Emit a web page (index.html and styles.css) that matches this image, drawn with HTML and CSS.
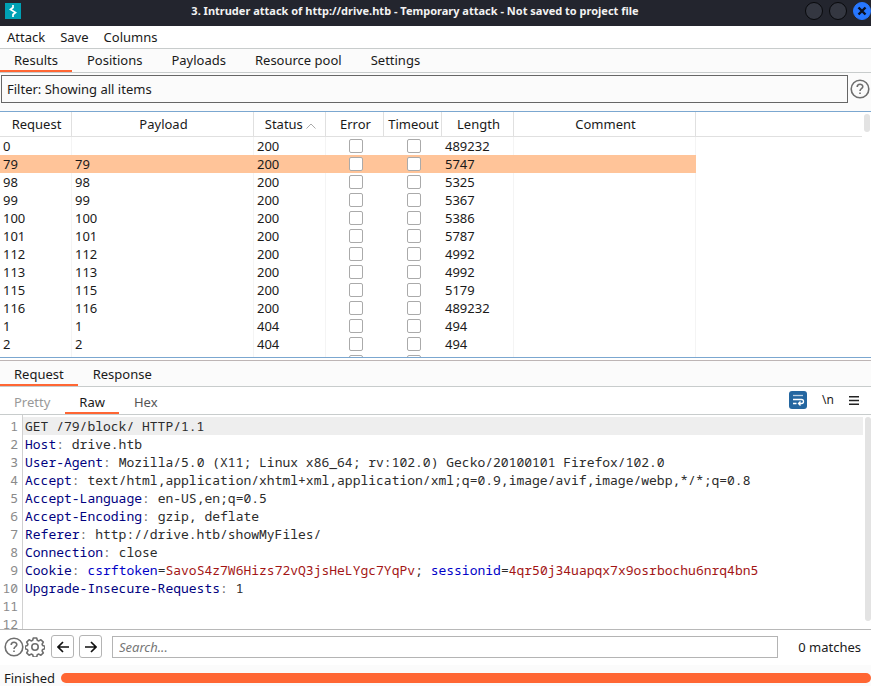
FILE: index.html
```html
<!DOCTYPE html>
<html lang="en">
<head>
	<meta charset="UTF-8">
	<meta name="viewport" content="width=device-width, initial-scale=1">
	<title>3. Intruder attack of http://drive.htb</title>
	<link rel="stylesheet" href="styles.css">
</head>
<body>
	<div class="titlebar">
		<svg class="logo" viewBox="0 0 16 16" width="16" height="16">
			<rect width="16" height="16" fill="#00a0b4"/>
			<path d="M8 2v2.500L5.500 6.500l5 3L8 11.500V14" fill="none" stroke="#fff" stroke-width="1.700"/>
		</svg>
		<h1>3. Intruder attack of http://drive.htb - Temporary attack - Not saved to project file</h1>
		<div class="winBtns">
			<button type="button" aria-label="Minimize"></button>
			<button type="button" aria-label="Maximize"></button>
			<button type="button" class="close" aria-label="Close">
				<svg viewBox="0 0 10 10" width="10" height="10"><path d="M1.500 1.500l7 7M8.500 1.500l-7 7" stroke="#0b1020" stroke-width="2.400" fill="none"/></svg>
			</button>
		</div>
	</div>

	<div class="menu">
		<button type="button">Attack</button>
		<button type="button">Save</button>
		<button type="button">Columns</button>
	</div>

	<div class="tabs">
		<button type="button" class="on">Results</button>
		<button type="button">Positions</button>
		<button type="button">Payloads</button>
		<button type="button">Resource pool</button>
		<button type="button">Settings</button>
	</div>

	<div class="filter">
		<button type="button" class="filterBtn">Filter: Showing all items</button>
		<button type="button" class="iconBtn" aria-label="Help">
			<svg viewBox="0 0 20 20" width="20" height="20" fill="none" stroke="#6e6e6e">
				<circle cx="10" cy="10" r="8.800" stroke-width="1.600"/>
				<path d="M7.200 8c0-3.600 5.600-3.600 5.600-.3 0 2-2.800 2-2.800 4.200M10 13.400v1.600" stroke-width="1.600"/>
			</svg>
		</button>
	</div>

	<div class="results">
		<table>
			<colgroup>
				<col class="w72"><col class="w182"><col class="w72"><col class="w58"><col class="w58"><col class="w72"><col class="w182"><col>
			</colgroup>
			<thead>
				<tr>
					<th>Request</th>
					<th>Payload</th>
					<th>Status <svg viewBox="0 0 10 6" width="10" height="6" fill="none" stroke="#aaa"><path d="M.5 5.500L5 1l4.500 4.500"/></svg></th>
					<th>Error</th>
					<th>Timeout</th>
					<th>Length</th>
					<th>Comment</th>
					<th></th>
				</tr>
			</thead>
			<tbody>
				<tr><td>0</td><td></td><td>200</td><td><input type="checkbox" aria-label="Error"></td><td><input type="checkbox" aria-label="Timeout"></td><td>489232</td><td></td><td></td></tr>
				<tr class="sel"><td>79</td><td>79</td><td>200</td><td><input type="checkbox" aria-label="Error"></td><td><input type="checkbox" aria-label="Timeout"></td><td>5747</td><td></td><td></td></tr>
				<tr><td>98</td><td>98</td><td>200</td><td><input type="checkbox" aria-label="Error"></td><td><input type="checkbox" aria-label="Timeout"></td><td>5325</td><td></td><td></td></tr>
				<tr><td>99</td><td>99</td><td>200</td><td><input type="checkbox" aria-label="Error"></td><td><input type="checkbox" aria-label="Timeout"></td><td>5367</td><td></td><td></td></tr>
				<tr><td>100</td><td>100</td><td>200</td><td><input type="checkbox" aria-label="Error"></td><td><input type="checkbox" aria-label="Timeout"></td><td>5386</td><td></td><td></td></tr>
				<tr><td>101</td><td>101</td><td>200</td><td><input type="checkbox" aria-label="Error"></td><td><input type="checkbox" aria-label="Timeout"></td><td>5787</td><td></td><td></td></tr>
				<tr><td>112</td><td>112</td><td>200</td><td><input type="checkbox" aria-label="Error"></td><td><input type="checkbox" aria-label="Timeout"></td><td>4992</td><td></td><td></td></tr>
				<tr><td>113</td><td>113</td><td>200</td><td><input type="checkbox" aria-label="Error"></td><td><input type="checkbox" aria-label="Timeout"></td><td>4992</td><td></td><td></td></tr>
				<tr><td>115</td><td>115</td><td>200</td><td><input type="checkbox" aria-label="Error"></td><td><input type="checkbox" aria-label="Timeout"></td><td>5179</td><td></td><td></td></tr>
				<tr><td>116</td><td>116</td><td>200</td><td><input type="checkbox" aria-label="Error"></td><td><input type="checkbox" aria-label="Timeout"></td><td>489232</td><td></td><td></td></tr>
				<tr><td>1</td><td>1</td><td>404</td><td><input type="checkbox" aria-label="Error"></td><td><input type="checkbox" aria-label="Timeout"></td><td>494</td><td></td><td></td></tr>
				<tr><td>2</td><td>2</td><td>404</td><td><input type="checkbox" aria-label="Error"></td><td><input type="checkbox" aria-label="Timeout"></td><td>494</td><td></td><td></td></tr>
				<tr><td></td><td></td><td></td><td><input type="checkbox" aria-label="Error"></td><td><input type="checkbox" aria-label="Timeout"></td><td></td><td></td><td></td></tr>
			</tbody>
		</table>
		<div class="track"><div class="thumb small"></div></div>
	</div>

	<div class="tabs message">
		<button type="button" class="on">Request</button>
		<button type="button">Response</button>
	</div>

	<div class="views">
		<button type="button" disabled>Pretty</button>
		<button type="button" class="on">Raw</button>
		<button type="button">Hex</button>
		<div class="tools">
			<button type="button" aria-label="Word wrap">
				<svg viewBox="0 0 18 18" width="18" height="18" fill="none" stroke="#fff">
					<rect width="18" height="18" rx="3" fill="#2466a0" stroke="none"/>
					<path d="M4 4.500h10" stroke-width="1.300" opacity=".7"/>
					<path d="M4 8.500h8.500a1.900 1.900 0 0 1 0 4H10M4 12.500h3.500M11.500 10.500l-2 2 2 2" stroke-width="1.300"/>
				</svg>
			</button>
			<button type="button" class="newline">\n</button>
			<button type="button" aria-label="Menu">
				<svg viewBox="0 0 10 9" width="10" height="9"><path d="M0 0h10v1.500H0zM0 3.800h10v1.500H0zM0 7.500h10V9H0z" fill="#222"/></svg>
			</button>
		</div>
	</div>

	<div class="editor">
		<div class="code">
			<div class="line cur"><span class="num">1</span><code>GET /79/block/ HTTP/1.1</code></div>
			<div class="line"><span class="num">2</span><code><b>Host</b><i>:</i> drive.htb</code></div>
			<div class="line"><span class="num">3</span><code><b>User-Agent</b><i>:</i> Mozilla/5.0 (X11; Linux x86_64; rv:102.0) Gecko/20100101 Firefox/102.0</code></div>
			<div class="line"><span class="num">4</span><code><b>Accept</b><i>:</i> text/html,application/xhtml+xml,application/xml;q=0.9,image/avif,image/webp,*/*;q=0.8</code></div>
			<div class="line"><span class="num">5</span><code><b>Accept-Language</b><i>:</i> en-US,en;q=0.5</code></div>
			<div class="line"><span class="num">6</span><code><b>Accept-Encoding</b><i>:</i> gzip, deflate</code></div>
			<div class="line"><span class="num">7</span><code><b>Referer</b><i>:</i> http://drive.htb/showMyFiles/</code></div>
			<div class="line"><span class="num">8</span><code><b>Connection</b><i>:</i> close</code></div>
			<div class="line"><span class="num">9</span><code><b>Cookie</b><i>:</i> <span class="key">csrftoken</span>=<span class="val">SavoS4z7W6Hizs72vQ3jsHeLYgc7YqPv</span>; <span class="key">sessionid</span>=<span class="val">4qr50j34uapqx7x9osrbochu6nrq4bn5</span></code></div>
			<div class="line"><span class="num">10</span><code><b>Upgrade-Insecure-Requests</b><i>:</i> 1</code></div>
			<div class="line"><span class="num">11</span><code></code></div>
			<div class="line"><span class="num">12</span><code></code></div>
		</div>
		<div class="track"><div class="thumb"></div></div>
	</div>

	<div class="search">
		<button type="button" class="iconBtn" aria-label="Help">
			<svg viewBox="0 0 20 20" width="20" height="20" fill="none" stroke="#6e6e6e">
				<circle cx="10" cy="10" r="8.800" stroke-width="1.600"/>
				<path d="M7.200 8c0-3.600 5.600-3.600 5.600-.3 0 2-2.800 2-2.800 4.200M10 13.400v1.600" stroke-width="1.600"/>
			</svg>
		</button>
		<button type="button" class="iconBtn" aria-label="Settings">
			<svg viewBox="0 0 20 20" width="20" height="20" fill="none" stroke="#6e6e6e" stroke-width="1.600" stroke-linejoin="round">
				<path d="M8.300 1h3.400l.6 2.300 1.500.6 2.100-1.200 2.400 2.400-1.200 2.100.6 1.400 2.100.6v2.600l-2.100.6-.6 1.400 1.200 2.100-2.400 2.400-2.100-1.200-1.500.6-.6 2.300H8.300l-.6-2.300-1.500-.6-2.100 1.200-2.400-2.400 1.200-2.100-.6-1.400-2.100-.6V9.200l2.100-.6.6-1.400-1.200-2.100 2.400-2.400 2.100 1.200 1.500-.6z"/>
				<circle cx="10" cy="10" r="3.200"/>
			</svg>
		</button>
		<button type="button" class="nav" aria-label="Previous match">
			<svg viewBox="0 0 12 12" width="12" height="12" fill="none" stroke="#111" stroke-width="1.700"><path d="M12 6H1.500M6 1L1 6l5 5"/></svg>
		</button>
		<button type="button" class="nav" aria-label="Next match">
			<svg viewBox="0 0 12 12" width="12" height="12" fill="none" stroke="#111" stroke-width="1.700"><path d="M0 6h10.500M6 1l5 5-5 5"/></svg>
		</button>
		<input type="text" placeholder="Search..." aria-label="Search">
		<span class="matches">0 matches</span>
	</div>

	<div class="status">
		<label for="progress">Finished</label>
		<progress id="progress" value="100" max="100"></progress>
	</div>
</body>
</html>
```
FILE: styles.css
```css
*{
	margin: 0;
	padding: 0;
	box-sizing: border-box;
}
body{
	display: flex;
	flex-direction: column;
	height: 100vh;
	overflow: hidden;
	background: #fff;
	color: #1a1a1a;
	font: 13px/18px "Noto Sans", sans-serif;
}
button{
	border: 0;
	background: none;
	color: inherit;
	font: inherit;
}
svg{
	display: block;
}
.titlebar{
	display: flex;
	align-items: center;
	flex: none;
	height: 26px;
	padding: 0 0 4px 5px;
	background: #23252e;
	color: #f2f2f2;
}
.titlebar h1{
	flex: 1;
	padding-left: 4px;
	font-size: 11px;
	line-height: 22px;
	text-align: center;
	white-space: nowrap;
}
.winBtns{
	display: flex;
	gap: 6px;
}
.winBtns button{
	display: flex;
	align-items: center;
	justify-content: center;
	width: 18px;
	height: 18px;
	border: 1px solid #08090c;
	border-radius: 50%;
	background: #343741;
}
.winBtns .close{
	border-color: #2777ff;
	background: #2777ff;
}
.menu{
	display: flex;
	flex: none;
	gap: 15px;
	height: 23px;
	padding: 0 7px;
	border-bottom: 1px solid #c8cccc;
}
.tabs{
	display: flex;
	flex: none;
	gap: 1px;
	height: 24px;
	border-bottom: 1px solid #c8cccc;
	background: #fbfbfb;
}
.tabs button{
	padding: 0 14px;
	border-bottom: 2px solid transparent;
}
.tabs .on,
.views .on{
	border-bottom-color: #ff6633;
}
.filter{
	display: flex;
	flex: none;
	gap: 2px;
	height: 38px;
	padding: 2px 1px 8px;
	background: #fbfbfb;
}
.filterBtn{
	flex: 1;
	padding: 0 5px;
	border: 1px solid #666;
	text-align: left;
}
.iconBtn{
	align-self: center;
}
.results{
	display: flex;
	flex: 1 1 247px;
	min-height: 0;
	overflow: hidden;
	border-top: 1px solid #7ba7d0;
	border-bottom: 1px solid #7ba7d0;
}
.results table{
	flex: 1;
	align-self: flex-start;
	table-layout: fixed;
	width: 100%;
	border-collapse: separate;
	border-spacing: 0;
}
.w58{
	width: 58px;
}
.w72{
	width: 72px;
}
.w182{
	width: 182px;
}
.results th{
	height: 25px;
	padding-left: 2px;
	border-right: 1px solid #e0e0e0;
	border-bottom: 1px solid #e0e0e0;
	font-weight: normal;
	white-space: nowrap;
}
.results th svg{
	display: inline-block;
	vertical-align: middle;
}
.results td{
	height: 18px;
	padding-left: 3px;
	border-right: 1px solid #f4f4f4;
	line-height: 18px;
}
.results th:last-child,
.results td:last-child,
.results td:nth-child(4),
.results td:nth-child(5){
	border-right: 0;
}
.results td:nth-child(4),
.results td:nth-child(5){
	padding-left: 1px;
}
.results .sel td:not(:last-child){
	border-color: #ffc499;
	background: #ffc499;
}
.results td input{
	display: block;
	appearance: none;
	width: 14px;
	height: 14px;
	margin: 0 auto;
	border: 1px solid #aaa;
	border-radius: 2px;
	background: #fff;
}
.track{
	flex: none;
	width: 9px;
	padding: 2px 1px 8px 2px;
}
.editor .track{
	width: 8px;
	padding-right: 0;
}
.thumb{
	height: 100%;
	border-radius: 3px;
	background: #e3e3e3;
}
.thumb.small{
	height: 18px;
}
.message{
	height: 29px;
	padding-top: 2px;
	background: linear-gradient(#fff 2px, #bdb5b5 2px, #bdb5b5 3px, #fbfbfb 3px);
}
.message button{
	padding-top: 4px;
}
.views{
	display: flex;
	flex: none;
	gap: 1px;
	height: 28px;
	border-bottom: 1px solid #c8cccc;
	color: #555;
}
.views > button{
	padding: 4px 14px 0;
	border-bottom: 2px solid transparent;
}
.views button:disabled{
	color: #999;
}
.views .on{
	color: #1a1a1a;
}
.tools{
	display: flex;
	align-items: center;
	gap: 15px;
	margin-left: auto;
	padding: 0 12px 1px 0;
	color: #1a1a1a;
}
.newline{
	font-size: 12px;
}
.editor{
	display: flex;
	flex: 1 1 215px;
	min-height: 0;
	overflow: hidden;
	border-bottom: 1px solid #b8b8b8;
}
.code{
	flex: 1;
	padding-top: 2px;
	background: linear-gradient(#d0d0d0, #d0d0d0) 22px 0 / 1px 100% no-repeat;
	font-family: "Noto Sans Mono", "DejaVu Sans Mono", monospace;
}
.line{
	display: flex;
	height: 18px;
}
.line .num{
	width: 23px;
	padding-right: 5px;
	color: #8a8a8a;
	text-align: right;
}
.line code{
	flex: 1;
	padding-left: 2px;
	color: #2b2b2b;
	font: inherit;
	white-space: pre;
}
.cur code{
	background: #eee;
}
.line b{
	color: #000080;
	font-weight: normal;
}
.line i{
	color: #666;
	font-style: normal;
}
.line .key{
	color: #0000c8;
}
.line .val{
	color: #a31515;
}
.search{
	display: flex;
	align-items: center;
	flex: none;
	height: 35px;
	padding: 0 10px 2px 4px;
}
.search .iconBtn{
	width: 21px;
}
.nav{
	display: flex;
	align-items: center;
	justify-content: center;
	width: 23px;
	height: 23px;
	margin-left: 5px;
	border: 1px solid #b4b4b4;
	border-radius: 3px;
}
.search input{
	flex: 1;
	height: 22px;
	margin: 0 20px 0 10px;
	padding: 0 6px;
	border: 1px solid #b4b4b4;
	font: inherit;
}
.search input::placeholder{
	color: #777;
	font-style: italic;
}
.status{
	display: flex;
	align-items: center;
	flex: none;
	gap: 6px;
	height: 21px;
	padding: 4px 0 0 4px;
	background: #fbfbfb;
}
.status progress{
	flex: 1;
	appearance: none;
	height: 10px;
	border: 0;
	border-radius: 5px;
	overflow: hidden;
}
.status progress::-webkit-progress-bar{
	background: #e3e3e3;
}
.status progress::-webkit-progress-value{
	background: #ff6633;
}
```
